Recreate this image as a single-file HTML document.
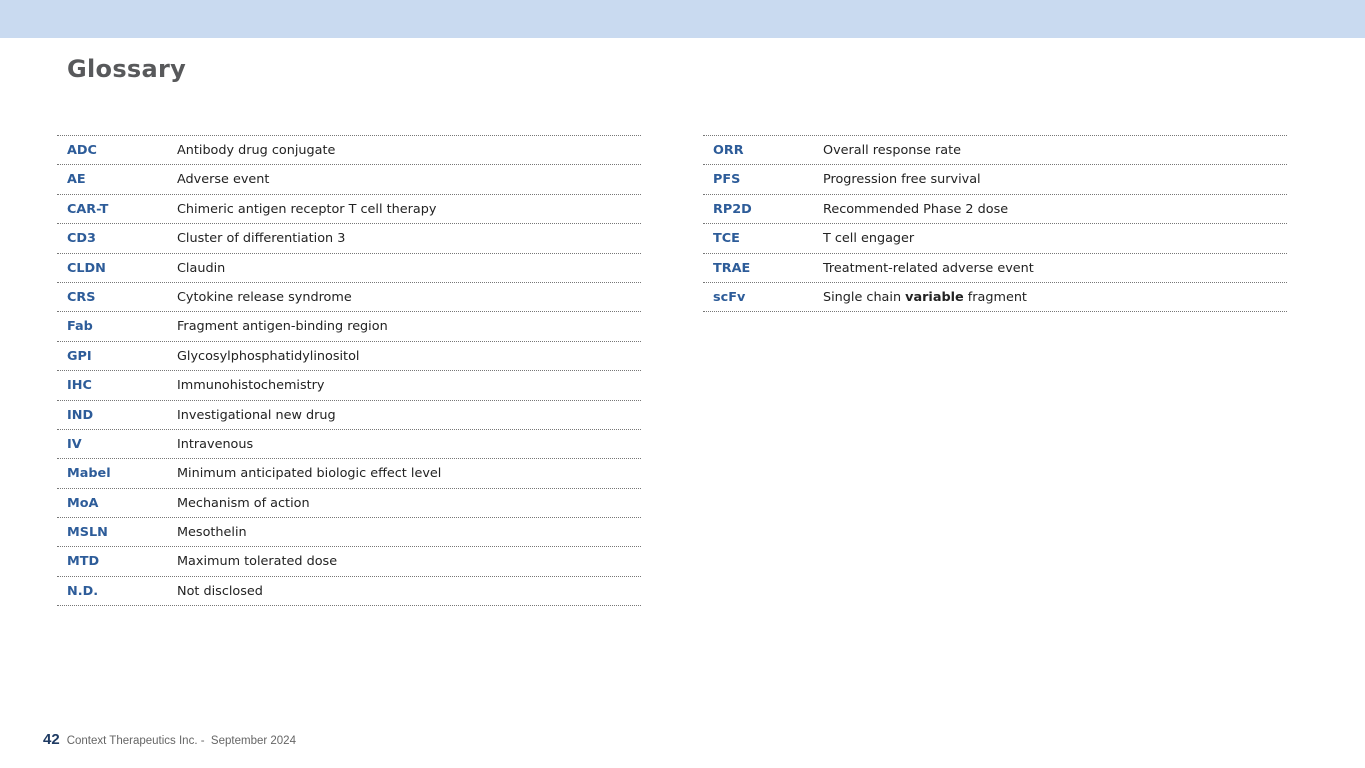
<!DOCTYPE html>
<html><head><meta charset="utf-8"><style>
body{margin:0;width:1365px;height:768px;background:#fff;position:relative;overflow:hidden;font-family:"DejaVu Sans","Liberation Sans",sans-serif;}
.band{position:absolute;left:0;top:0;width:1365px;height:38px;background:#c9daf0;}
h1{position:absolute;left:67px;top:55px;margin:0;font-size:24px;font-weight:bold;color:#58595b;letter-spacing:0.3px;font-family:"DejaVu Sans","Liberation Sans",sans-serif;}
.tbl{position:absolute;top:135px;width:584px;border-top:1px dotted #777;}
.row{height:28.4px;border-bottom:1px dotted #777;position:relative;font-size:12.8px;color:#222;}
.row span{position:absolute;top:7px;}
.a{left:10px;color:#2d5c99;font-weight:bold;}
.d{left:120px;}
.foot{position:absolute;left:43px;top:731px;font-size:11.5px;color:#666;font-family:"Liberation Sans",sans-serif;}
.foot b{font-size:15px;color:#1f3b63;margin-right:7px;}
</style></head><body>
<div class="band"></div>
<h1>Glossary</h1>
<div class="tbl" style="left:57px">
<div class="row"><span class="a">ADC</span><span class="d">Antibody drug conjugate</span></div>
<div class="row"><span class="a">AE</span><span class="d">Adverse event</span></div>
<div class="row"><span class="a">CAR-T</span><span class="d">Chimeric antigen receptor T cell therapy</span></div>
<div class="row"><span class="a">CD3</span><span class="d">Cluster of differentiation 3</span></div>
<div class="row"><span class="a">CLDN</span><span class="d">Claudin</span></div>
<div class="row"><span class="a">CRS</span><span class="d">Cytokine release syndrome</span></div>
<div class="row"><span class="a">Fab</span><span class="d">Fragment antigen-binding region</span></div>
<div class="row"><span class="a">GPI</span><span class="d">Glycosylphosphatidylinositol</span></div>
<div class="row"><span class="a">IHC</span><span class="d">Immunohistochemistry</span></div>
<div class="row"><span class="a">IND</span><span class="d">Investigational new drug</span></div>
<div class="row"><span class="a">IV</span><span class="d">Intravenous</span></div>
<div class="row"><span class="a">Mabel</span><span class="d">Minimum anticipated biologic effect level</span></div>
<div class="row"><span class="a">MoA</span><span class="d">Mechanism of action</span></div>
<div class="row"><span class="a">MSLN</span><span class="d">Mesothelin</span></div>
<div class="row"><span class="a">MTD</span><span class="d">Maximum tolerated dose</span></div>
<div class="row"><span class="a">N.D.</span><span class="d">Not disclosed</span></div>
</div>
<div class="tbl" style="left:703px">
<div class="row"><span class="a">ORR</span><span class="d">Overall response rate</span></div>
<div class="row"><span class="a">PFS</span><span class="d">Progression free survival</span></div>
<div class="row"><span class="a">RP2D</span><span class="d">Recommended Phase 2 dose</span></div>
<div class="row"><span class="a">TCE</span><span class="d">T cell engager</span></div>
<div class="row"><span class="a">TRAE</span><span class="d">Treatment-related adverse event</span></div>
<div class="row"><span class="a">scFv</span><span class="d">Single chain <b>variable</b> fragment</span></div>
</div>
<div class="foot"><b>42</b>Context Therapeutics Inc. -&nbsp; September 2024</div>
</body></html>
